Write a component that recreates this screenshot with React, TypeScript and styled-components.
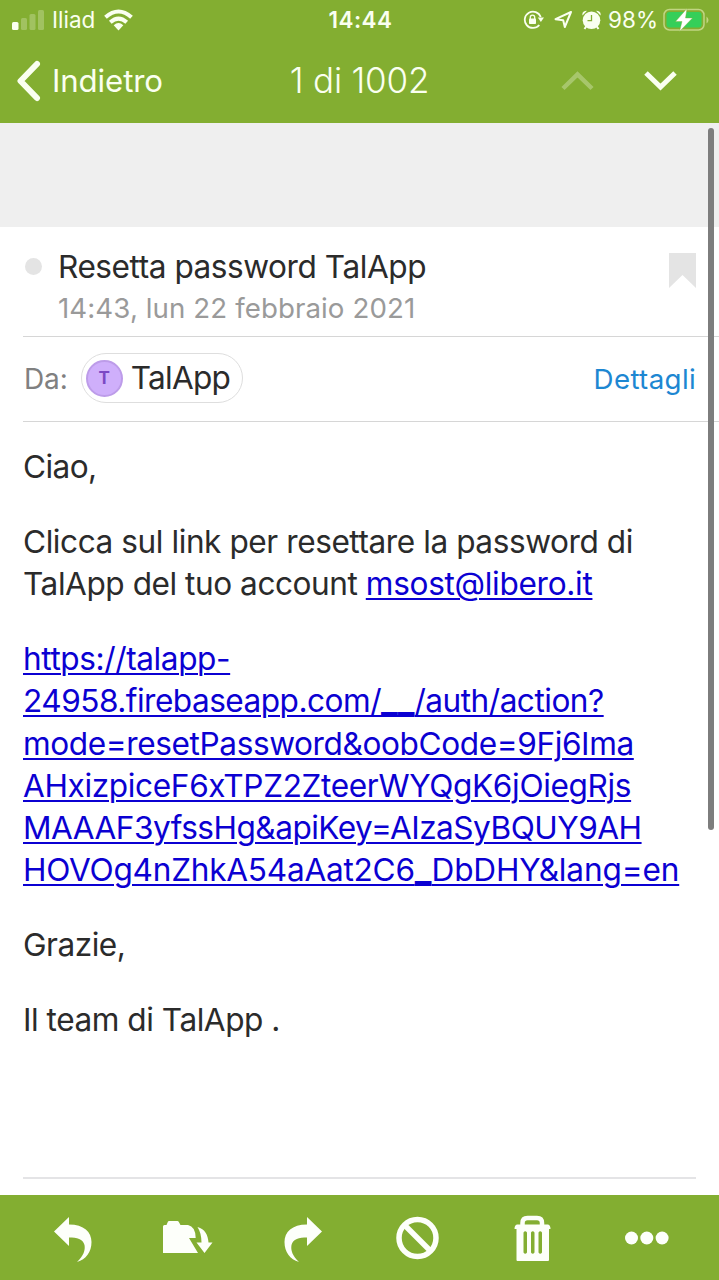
import React from "react";
import styled, { createGlobalStyle } from "styled-components";

const GREEN = "#83ae31";

const GlobalStyle = createGlobalStyle`
  * { box-sizing: border-box; }
  html, body { margin: 0; padding: 0; background: #fff; overflow: hidden; }
  body { font-family: Inter, "Liberation Sans", sans-serif; color: #2b2b2b; }
`;

const Screen = styled.div`
  position: relative;
  width: 719px;
  height: 1280px;
  display: flex;
  flex-direction: column;
  background: #fff;
  overflow: hidden;
`;

const Header = styled.header`
  height: 123px;
  flex: none;
  background: ${GREEN};
  color: #fafff0;
`;

const StatusBar = styled.div`
  height: 39px;
  display: grid;
  grid-template-columns: 1fr auto 1fr;
  align-items: center;
  padding: 0 10px 0 12px;
`;

const StatusGroup = styled.div<{ $end?: boolean }>`
  display: flex;
  align-items: center;
  justify-content: ${(p) => (p.$end ? "flex-end" : "flex-start")};
`;

const Text = styled.span<{ $size: number; $track?: number; $weight?: number; $color?: string }>`
  font-size: ${(p) => p.$size}px;
  letter-spacing: ${(p) => p.$track ?? 0}px;
  font-weight: ${(p) => p.$weight ?? 400};
  color: ${(p) => p.$color ?? "inherit"};
  line-height: 1.2;
  white-space: nowrap;
`;

const StatusText = styled(Text)`
  margin-left: 7px;
`;

const Icon = styled.svg<{ $left?: number; $top?: number }>`
  display: block;
  flex: none;
  margin-left: ${(p) => p.$left ?? 0}px;
  margin-top: ${(p) => p.$top ?? 0}px;
`;

const NavBar = styled.nav`
  height: 83px;
  display: grid;
  grid-template-columns: 1fr auto 1fr;
  align-items: center;
  padding: 0 42px;
`;

const NavButton = styled.button`
  display: flex;
  align-items: center;
  gap: 10px;
  margin-left: -26px;
  padding: 0;
  border: 0;
  background: none;
  color: inherit;
  font-family: inherit;
`;

const NavLabel = styled(Text)`
  padding-top: 2px;
`;

const NavTitle = styled(Text)`
  padding-bottom: 2px;
`;

const NavArrows = styled.div`
  display: flex;
  justify-content: flex-end;
  gap: 50px;
`;

const Banner = styled.div`
  height: 104px;
  flex: none;
  background: #efefef;
`;

const Message = styled.main`
  flex: 1;
  display: flex;
  flex-direction: column;
`;

const SubjectRow = styled.section`
  height: 110px;
  margin-left: 23px;
  padding: 20px 23px 0 2px;
  display: flex;
  align-items: flex-start;
  border-bottom: 1px solid #d6d6d6;
`;

const UnreadDot = styled.i`
  width: 17px;
  height: 17px;
  margin-top: 11px;
  border-radius: 50%;
  background: #e4e4e4;
`;

const SubjectText = styled.div`
  flex: 1;
  display: flex;
  flex-direction: column;
  gap: 6px;
  margin-left: 16px;
  padding-top: 1px;
`;

const SenderRow = styled.section`
  height: 85px;
  margin-left: 23px;
  padding: 0 23px 1px 0;
  display: flex;
  align-items: center;
  border-bottom: 1px solid #d6d6d6;
`;

const SenderLabel = styled(Text)`
  padding: 2px 0 0 1px;
`;

const SenderChip = styled.div`
  width: 162px;
  height: 50px;
  margin: -1px 0 0 13px;
  padding-left: 4px;
  display: flex;
  align-items: center;
  gap: 8px;
  border: 1px solid #dedede;
  border-radius: 25px;
`;

const Avatar = styled.span`
  width: 37px;
  height: 37px;
  flex: none;
  display: grid;
  place-items: center;
  border: 2px solid #bd9ce9;
  border-radius: 50%;
  background: #cfaffb;
`;

const Details = styled.a`
  margin: 3px 0 0 auto;
  color: #1d87d2;
`;

const Body = styled.article`
  flex: 1;
  margin: 0 23px;
  padding-top: 24.2px;
  font-size: 31.6px;
  line-height: 42.2px;
  border-bottom: 2px solid #e4e4e6;
`;

const Paragraph = styled.p`
  margin: 0 0 32.7px;
`;

const Line = styled.span`
  display: block;
  white-space: nowrap;
`;

const Run = styled.span<{ $track: number; $wide?: boolean }>`
  letter-spacing: ${(p) => p.$track}px;
  font-size: ${(p) => (p.$wide ? 1.16 : 1)}em;
  line-height: ${(p) => (p.$wide ? "20px" : "inherit")};
`;

const Link = styled.a`
  color: #0b00d2;
  text-decoration: underline;
  text-decoration-thickness: 2px;
  text-underline-offset: 3px;
`;

const ScrollThumb = styled.div`
  position: absolute;
  top: 128px;
  right: 5.5px;
  width: 6px;
  height: 702px;
  border-radius: 3px;
  background: #7d7d7d;
`;

const Toolbar = styled.footer`
  height: 85px;
  flex: none;
  margin-top: 16px;
  padding: 0 14px 0 16px;
  display: grid;
  grid-template-columns: repeat(6, 1fr);
  align-items: center;
  background: ${GREEN};
`;

const Tool = styled.button`
  display: grid;
  place-items: center;
  padding: 0;
  border: 0;
  background: none;
  color: #fdfffa;
`;

type TextRun = [text: string, track: number, wide?: boolean];

const linkLines: TextRun[][] = [
  [["https://talapp-", -0.41]],
  [["24958.firebaseapp.com/", -0.52], ["__", 0, true], ["/auth/action?", -0.5]],
  [["mode=resetPassword&oobCode=9Fj6Ima", -0.4]],
  [["AHxizpiceF6xTPZ2ZteerWYQgK6jOiegRjs", -0.36]],
  [["MAAAF3yfssHg&apiKey=AIzaSyBQUY9AH", -0.51]],
  [["HOVOg4nZhkA54aAat2C6", -0.25], ["_", 0, true], ["DbDHY&lang=en", -0.15]],
];

export default function App() {
  return (
    <Screen>
      <GlobalStyle />
      <Header>
        <StatusBar>
          <StatusGroup>
            <Icon width="33" height="22" viewBox="0 0 33 22" fill="currentColor">
              <rect x="0" y="13" width="6.500" height="8" rx="1.500" />
              <g opacity=".25">
                <rect x="9" y="9" width="6" height="12" rx="1.500" />
                <rect x="17.500" y="5" width="6" height="16" rx="1.500" />
                <rect x="26" y="1" width="6" height="20" rx="1.500" />
              </g>
            </Icon>
            <StatusText $size={22.500}>Iliad</StatusText>
            <Icon $left={9} width="29" height="22" viewBox="0 0 29 22" fill="none" stroke="currentColor" strokeWidth="4">
              <path d="M1.500 8.300Q14.500-3.300 27.500 8.300" />
              <path d="M6.300 13.300Q14.500 5.900 22.700 13.300" />
              <path d="M9.700 16.300Q14.500 11.500 19.300 16.300L14.500 21.500Z" fill="currentColor" stroke="none" />
            </Icon>
          </StatusGroup>
          <Text $size={22.500} $weight={600} $track={0.5}>14:44</Text>
          <StatusGroup $end>
            <Icon width="21" height="20" viewBox="0 0 21 20" fill="none" stroke="currentColor" strokeWidth="1.800">
              <path d="M17.700 7A8.200 8.200 0 1 0 16.300 15" />
              <path d="M14.800 7.500H21L17.900 12Z" fill="currentColor" stroke="none" />
              <rect x="6" y="8.500" width="7" height="5.500" rx=".8" fill="currentColor" stroke="none" />
              <path d="M7.300 9V7.300a2.200 2.200 0 0 1 4.400 0V9" strokeWidth="1.300" />
            </Icon>
            <Icon $left={10} width="19" height="19" viewBox="0 0 19 19" fill="none" stroke="currentColor" strokeWidth="2" strokeLinejoin="round">
              <path d="M17 2L1.500 9.200L9.200 10.200L10.800 17Z" />
            </Icon>
            <Icon $left={9} width="19" height="20" viewBox="0 0 19 20" fill="currentColor">
              <circle cx="9.500" cy="10.200" r="8.800" />
              <path d="M.5 5.500Q-.5 1 5 .7Z M18.500 5.500Q19.500 1 14 .7Z" />
              <path d="M4.500 16L2.500 19M14.500 16L16.500 19" stroke="currentColor" strokeWidth="2" />
              <path d="M9.500 5V10.700H5.500" fill="none" stroke={GREEN} strokeWidth="1.300" />
            </Icon>
            <StatusText $size={22.500}>98%</StatusText>
            <Icon $left={5} width="46" height="26" viewBox="0 0 46 26">
              <rect x="1" y="2.500" width="40" height="20.500" rx="5.500" fill="none" stroke="#c1d583" strokeWidth="1.500" />
              <rect x="3.500" y="5" width="35" height="15.500" rx="3" fill="#35cf59" />
              <path d="M43.500 9.500V16.500Q45.500 15 45.500 13T43.500 9.500Z" fill="#c1d583" />
              <path d="M24 1.500L12.500 14.500H19L16.500 24.500L29.500 11H22.500Z" fill="#fff" stroke={GREEN} strokeWidth=".4" />
            </Icon>
          </StatusGroup>
        </StatusBar>
        <NavBar>
          <NavButton>
            <Icon width="26" height="42" viewBox="0 0 26 42" fill="none" stroke="currentColor" strokeWidth="6" strokeLinecap="round" strokeLinejoin="round">
              <path d="M21 4L4.500 21L21 38" />
            </Icon>
            <NavLabel $size={31.200} $track={-0.1}>Indietro</NavLabel>
          </NavButton>
          <NavTitle $size={35} $weight={300} $track={-0.2}>1 di 1002</NavTitle>
          <NavArrows>
            <Icon width="33" height="22" viewBox="0 0 33 22" fill="none" stroke="currentColor" strokeWidth="4.500" opacity=".3">
              <path d="M2 18.500L16.500 4.500L31 18.500" />
            </Icon>
            <Icon width="33" height="22" viewBox="0 0 33 22" fill="none" stroke="currentColor" strokeWidth="5">
              <path d="M2 3L16.500 17L31 3" />
            </Icon>
          </NavArrows>
        </NavBar>
      </Header>
      <Banner />
      <Message>
        <SubjectRow>
          <UnreadDot />
          <SubjectText>
            <Text $size={31.600} $track={-0.46} $color="#2b2b2b">Resetta password TalApp</Text>
            <Text $size={27.700} $track={0.08} $color="#9a9a9a">14:43, lun 22 febbraio 2021</Text>
          </SubjectText>
          <Icon $top={6} width="27" height="35" viewBox="0 0 27 35">
            <path d="M0 0H27V35L13.500 22L0 35Z" fill="#e4e4e4" />
          </Icon>
        </SubjectRow>
        <SenderRow>
          <SenderLabel $size={28} $track={-0.1} $color="#808080">Da:</SenderLabel>
          <SenderChip>
            <Avatar>
              <Text $size={17} $weight={700} $color="#7b48c4">T</Text>
            </Avatar>
            <Text $size={31.600} $track={-0.75} $color="#2b2b2b">TalApp</Text>
          </SenderChip>
          <Details>
            <Text $size={27.700} $track={0.35}>Dettagli</Text>
          </Details>
        </SenderRow>
        <Body>
          <Paragraph>
            <Line><Run $track={-0.6}>Ciao,</Run></Line>
          </Paragraph>
          <Paragraph>
            <Line><Run $track={-0.44}>Clicca sul link per resettare la password di</Run></Line>
            <Line>
              <Run $track={-0.46}>TalApp del tuo account </Run>
              <Link><Run $track={-0.31}>msost@libero.it</Run></Link>
            </Line>
          </Paragraph>
          <Paragraph>
            {linkLines.map((runs) => (
              <Line key={runs[0][0]}>
                <Link>
                  {runs.map(([text, track, wide]) => (
                    <Run key={text} $track={track} $wide={wide}>{text}</Run>
                  ))}
                </Link>
              </Line>
            ))}
          </Paragraph>
          <Paragraph>
            <Line><Run $track={-0.5}>Grazie,</Run></Line>
          </Paragraph>
          <Paragraph>
            <Line><Run $track={-0.47}>Il team di TalApp .</Run></Line>
          </Paragraph>
        </Body>
      </Message>
      <ScrollThumb />
      <Toolbar>
        <Tool aria-label="Rispondi">
          <Icon width="40" height="48" viewBox="0 0 40 48" fill="currentColor">
            <path d="M1 17.500L16 3V10.500C31 10.500 38.500 18 38.500 28C38.500 38 33 45.500 24 48C30.500 42 32.500 36 31.500 31C30 25 24 23.500 16 23.500V32Z" />
          </Icon>
        </Tool>
        <Tool aria-label="Sposta">
          <Icon width="50" height="34" viewBox="0 0 50 34" fill="currentColor">
            <path d="M0 5.500Q0 4 1.500 4H3.500L5 .5Q5.300 0 6 0H14.500Q15.200 0 15.700 .8L17.500 4H25Q32.500 5.500 32.700 17H26L35 32H0Z" />
            <path d="M34.500 6C42 8 45 14 45.500 21.500H49.500L41.500 32L33.500 21.500H38.500C38.500 15 37 10 34.500 6Z" />
          </Icon>
        </Tool>
        <Tool aria-label="Inoltra">
          <Icon width="40" height="48" viewBox="0 0 40 48" fill="currentColor">
            <path d="M39 17.500L24 3V10.500C9 10.500 1.500 18 1.500 28C1.500 38 7 45.500 16 48C9.500 42 7.500 36 8.500 31C10 25 16 23.500 24 23.500V32Z" />
          </Icon>
        </Tool>
        <Tool aria-label="Blocca">
          <Icon width="44" height="44" viewBox="0 0 44 44" fill="none" stroke="currentColor" strokeWidth="5.500">
            <circle cx="21.500" cy="22" r="18.500" />
            <path d="M8.500 9L34.500 35" />
          </Icon>
        </Tool>
        <Tool aria-label="Elimina">
          <Icon width="37" height="46" viewBox="0 0 37 46" fill="currentColor">
            <path d="M8.500 10V8Q8.500 3 13.500 3H23Q28 3 28 8V10" fill="none" stroke="currentColor" strokeWidth="4.500" />
            <path fillRule="evenodd" d="M3 9.500H34Q36.500 10 36.500 14H35V45Q35 46 34 46H3.500Q2.500 46 2.500 45V14H.5Q.5 10 3 9.500ZM9.500 17.500V37.500Q11.200 40 13 37.500V17.500Q11.200 15 9.500 17.500ZM17 17.500V37.500Q18.700 40 20.500 37.500V17.500Q18.700 15 17 17.500ZM24.500 17.500V37.500Q26.200 40 28 37.500V17.500Q26.200 15 24.500 17.500Z" />
          </Icon>
        </Tool>
        <Tool aria-label="Altro">
          <Icon width="45" height="14" viewBox="0 0 45 14" fill="currentColor">
            <circle cx="6.500" cy="7" r="6.500" />
            <circle cx="21.800" cy="7" r="6.500" />
            <circle cx="37.100" cy="7" r="6.500" />
          </Icon>
        </Tool>
      </Toolbar>
    </Screen>
  );
}
